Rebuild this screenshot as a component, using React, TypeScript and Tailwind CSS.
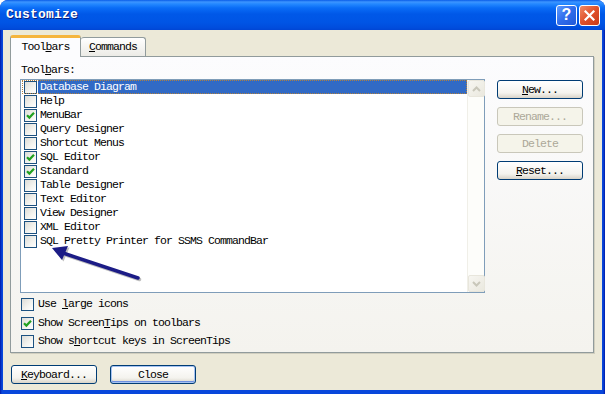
import React from "react";

const mono = "[font-family:'Liberation_Mono',monospace] text-[11.5px] tracking-[-0.9px]";

function Box({ checked }: { checked?: boolean }) {
  return (
    <span className="w-[13px] h-[13px] border border-[#1C5180] bg-[linear-gradient(135deg,#DCDCD7,#F4F4F0_60%,#FFFFFF)] flex items-center justify-center shrink-0">
      {checked && (
        <svg width="9" height="9" viewBox="0 0 9 9">
          <path d="M1 4.2 L3.4 6.6 L8 1.8" stroke="#21A121" strokeWidth="2.2" fill="none" />
        </svg>
      )}
    </span>
  );
}

function Btn({ children, disabled, isDefault }: { children: React.ReactNode; disabled?: boolean; isDefault?: boolean }) {
  if (disabled)
    return (
      <div className={`w-[86px] h-[19px] rounded-[3px] border border-[#C9C7BA] bg-[#F5F4EA] text-[#ACA899] flex items-center justify-center ${mono}`}>
        {children}
      </div>
    );
  return (
    <div
      className={`w-[86px] h-[19px] rounded-[3px] border border-[#003C74] bg-[linear-gradient(to_bottom,#FFFFFF,#F4F3EE_70%,#D8D3C8)] text-black flex items-center justify-center ${mono} ${
        isDefault ? "shadow-[inset_0_0_0_1px_#A6C3F2,inset_0_-1px_0_1px_#6D8FE0]" : ""
      }`}
    >
      {children}
    </div>
  );
}

const items: [string, boolean][] = [
  ["Database Diagram", false],
  ["Help", false],
  ["MenuBar", true],
  ["Query Designer", false],
  ["Shortcut Menus", false],
  ["SQL Editor", true],
  ["Standard", true],
  ["Table Designer", false],
  ["Text Editor", false],
  ["View Designer", false],
  ["XML Editor", false],
  ["SQL Pretty Printer for SSMS CommandBar", false],
];

function ScrollArrow({ up }: { up?: boolean }) {
  return (
    <div className="w-[17px] h-[17px] rounded-[2px] border border-[#E8E6DC] bg-[linear-gradient(135deg,#F7F6F1,#EAE8DE)] flex items-center justify-center">
      <svg width="9" height="6" viewBox="0 0 9 6">
        <path d={up ? "M1 5 L4.5 1.5 L8 5" : "M1 1 L4.5 4.5 L8 1"} stroke="#C9C7BA" strokeWidth="2" fill="none" />
      </svg>
    </div>
  );
}

export default function App() {
  return (
    <div className="w-[605px] h-[394px] bg-white">
      <div className="relative w-full h-full flex flex-col rounded-t-[8px] overflow-hidden bg-[linear-gradient(to_right,#0019A8,#0847DB_2px,#0847DB_calc(100%-2px),#0019A8)]">
        {/* title bar */}
        <div className="h-[30px] shrink-0 flex items-center pl-[6px] pr-[5px] bg-[linear-gradient(to_bottom,#0A5CE8_0px,#3D95FF_2px,#2488FF_4px,#0A6CF6_8px,#0058E8_14px,#0055E5_22px,#004CDC_28px,#0045D4_30px)]">
          <span className="[font-family:'Liberation_Mono',monospace] text-[13px] font-bold tracking-[0.2px] text-white [text-shadow:1px_1px_0_#0A1E7A]">
            Customize
          </span>
          <div className="ml-auto flex gap-[2px]">
            <div className="w-[21px] h-[21px] rounded-[3px] border border-white bg-[linear-gradient(135deg,#5E9BFF,#2F6CEB_50%,#2258D8)] flex items-center justify-center">
              <span className="[font-family:'Liberation_Sans',sans-serif] font-bold text-[16px] leading-none text-white">?</span>
            </div>
            <div className="w-[21px] h-[21px] rounded-[3px] border border-white bg-[linear-gradient(135deg,#F08A66,#E0502A_50%,#C93A18)] flex items-center justify-center">
              <svg width="11" height="11" viewBox="0 0 11 11">
                <path d="M1.5 1.5 L9.5 9.5 M9.5 1.5 L1.5 9.5" stroke="white" strokeWidth="2.2" strokeLinecap="square" />
              </svg>
            </div>
          </div>
        </div>
        {/* body */}
        <div className="flex-1 flex flex-col mx-[3px] mb-[4px] bg-[#ECE9D8] pl-[7px] pt-[5px]">
          {/* tabs */}
          <div className="flex items-end h-[21px] relative z-10">
            <div className={`w-[71px] h-[22px] mb-[-1px] rounded-t-[3px] border-x border-[#919B9C] border-t-[3px] border-t-[#F5B53E] bg-[#FCFCFE] flex items-center justify-center pb-[2px] ${mono} text-black`}>
              Tool<u>b</u>ars
            </div>
            <div className={`w-[65px] h-[19px] rounded-t-[3px] border-t border-r border-[#919B9C] bg-[linear-gradient(to_bottom,#FFFFFF,#ECEBE6)] flex items-center justify-center ${mono} text-black`}>
              <u>C</u>ommands
            </div>
          </div>
          {/* tab page */}
          <div className="w-[584px] h-[297px] border border-[#919B9C] shadow-[1px_1px_0_#D0CEBF] bg-[linear-gradient(to_bottom,#FCFCFE,#F4F3EE)] flex flex-col pl-[9px] pt-[6px]">
            <div className={`ml-[1px] h-[14px] leading-[14px] ${mono} text-black`}>
              Tool<u>b</u>ars:
            </div>
            <div className="flex mt-[2px]">
              <div className="w-[465px] h-[214px] border border-[#7F9DB9] bg-white flex">
                <div className="flex-1 flex flex-col pl-[1px]">
                  {items.map(([name, checked], i) => (
                    <div
                      key={name}
                      className={`h-[14px] flex items-center ${i === 0 ? "outline-1 outline-dotted outline-[#B08040] -outline-offset-1" : ""}`}
                    >
                      <span className="ml-[2px]"><Box checked={checked} /></span>
                      <span
                        className={`h-[14px] flex-1 ml-[1px] pl-[2px] leading-[14px] ${mono} ${
                          i === 0 ? "bg-[#316AC5] text-white" : "text-black"
                        }`}
                      >
                        {name}
                      </span>
                    </div>
                  ))}
                </div>
                <div className="w-[17px] h-full bg-[#FDFDFA] border-l border-[#F0EFE8] flex flex-col justify-between">
                  <ScrollArrow up />
                  <ScrollArrow />
                </div>
              </div>
              <div className="ml-[12px] mt-[1px] flex flex-col gap-[8px]">
                <Btn><u>N</u>ew...</Btn>
                <Btn disabled>Rename...</Btn>
                <Btn disabled>Delete</Btn>
                <Btn><u>R</u>eset...</Btn>
              </div>
            </div>
            <div className="mt-[2px] flex flex-col">
              <div className={`h-[18px] flex items-center ml-[1px] ${mono} text-black`}>
                <Box />
                <span className="ml-[4px]">Use <u>l</u>arge icons</span>
              </div>
              <div className={`h-[18px] mt-[1px] flex items-center ml-[1px] ${mono} text-black`}>
                <Box checked />
                <span className="ml-[4px]">Show Screen<u>T</u>ips on toolbars</span>
              </div>
              <div className={`h-[18px] flex items-center ml-[1px] ${mono} text-black`}>
                <Box />
                <span className="ml-[4px]">Show s<u>h</u>ortcut keys in ScreenTips</span>
              </div>
            </div>
          </div>
          {/* bottom buttons */}
          <div className="flex mt-[12px] ml-[1px] gap-[13px]">
            <Btn><u>K</u>eyboard...</Btn>
            <Btn isDefault>Close</Btn>
          </div>
        </div>
        {/* annotation arrow */}
        <svg className="absolute left-0 top-0 pointer-events-none" width="605" height="394">
          <g transform="translate(1.5,1.5)" opacity="0.25">
            <path d="M138 278 L63 253" stroke="#000" strokeWidth="3.5" strokeLinecap="round" />
            <polygon points="52,248 68,246 62,260" fill="#000" />
          </g>
          <path d="M138 278 L63 253" stroke="#1C1C86" strokeWidth="3.5" strokeLinecap="round" />
          <polygon points="52,248 68,246 62,260" fill="#1C1C86" />
        </svg>
      </div>
    </div>
  );
}
